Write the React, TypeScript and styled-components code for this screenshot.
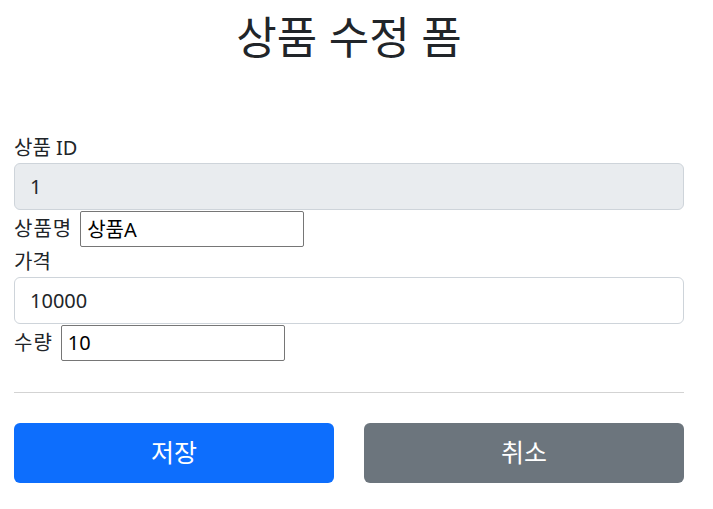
import React from 'react'
import styled, { createGlobalStyle } from 'styled-components'

const GlobalStyle = createGlobalStyle`
  body {
    margin: 0;
    background: #fff;
    color: #212529;
    font-family: "Noto Sans", "Noto Sans CJK KR", sans-serif;
    font-size: 20px;
    line-height: 1.5;
  }
`

const Container = styled.div`
  width: 670px;
  margin-left: 14px;
`

const Title = styled.h2`
  margin: 0;
  padding-top: 11px;
  height: 133px;
  box-sizing: border-box;
  text-align: center;
  font-size: 44px;
  font-weight: 400;
  line-height: 1.2;
`

const Form = styled.form`
  display: flex;
  flex-direction: column;
`

const Label = styled.label`
  display: block;
  height: 30px;
  line-height: 30px;
`

const InlineRow = styled.div`
  display: flex;
  align-items: center;
  gap: 8px;
  height: 37px;
`

const InlineLabel = styled.label`
  letter-spacing: 1px;
`

const FormControl = styled.input<{ $disabled?: boolean }>`
  box-sizing: border-box;
  width: 100%;
  height: 47px;
  padding: 7px 15px;
  font: inherit;
  color: #212529;
  background: ${({ $disabled }) => ($disabled ? '#e9ecef' : '#fff')};
  border: 1px solid #ced4da;
  border-radius: 6px;
  outline: none;
`

const PlainInput = styled.input`
  box-sizing: border-box;
  width: 224px;
  height: 36px;
  padding: 0 6px;
  font: inherit;
  color: #000;
  background: #fff;
  border: 1px solid #767676;
  border-radius: 2px;
  outline: none;
`

const Rule = styled.hr`
  margin: 31px 0 30px;
  border: 0;
  border-top: 1px solid #d3d3d3;
`

const ButtonRow = styled.div`
  display: grid;
  grid-template-columns: 1fr 1fr;
  gap: 30px;
`

const Button = styled.button<{ $variant: 'primary' | 'secondary' }>`
  height: 60px;
  border: 0;
  border-radius: 6px;
  color: #fff;
  font: inherit;
  font-size: 25px;
  background: ${({ $variant }) => ($variant === 'primary' ? '#0d6efd' : '#6c757d')};
  cursor: pointer;
`

export default function App() {
  return (
    <Container>
      <GlobalStyle />
      <Title>상품 수정 폼</Title>
      <Form onSubmit={e => e.preventDefault()}>
        <Label htmlFor="id">상품 ID</Label>
        <FormControl id="id" $disabled value="1" readOnly />
        <InlineRow>
          <InlineLabel htmlFor="name">상품명</InlineLabel>
          <PlainInput id="name" defaultValue="상품A" />
        </InlineRow>
        <Label htmlFor="price">가격</Label>
        <FormControl id="price" defaultValue="10000" />
        <InlineRow>
          <InlineLabel htmlFor="quantity">수량</InlineLabel>
          <PlainInput id="quantity" defaultValue="10" />
        </InlineRow>
        <Rule />
        <ButtonRow>
          <Button $variant="primary" type="submit">저장</Button>
          <Button $variant="secondary" type="button">취소</Button>
        </ButtonRow>
      </Form>
    </Container>
  )
}
